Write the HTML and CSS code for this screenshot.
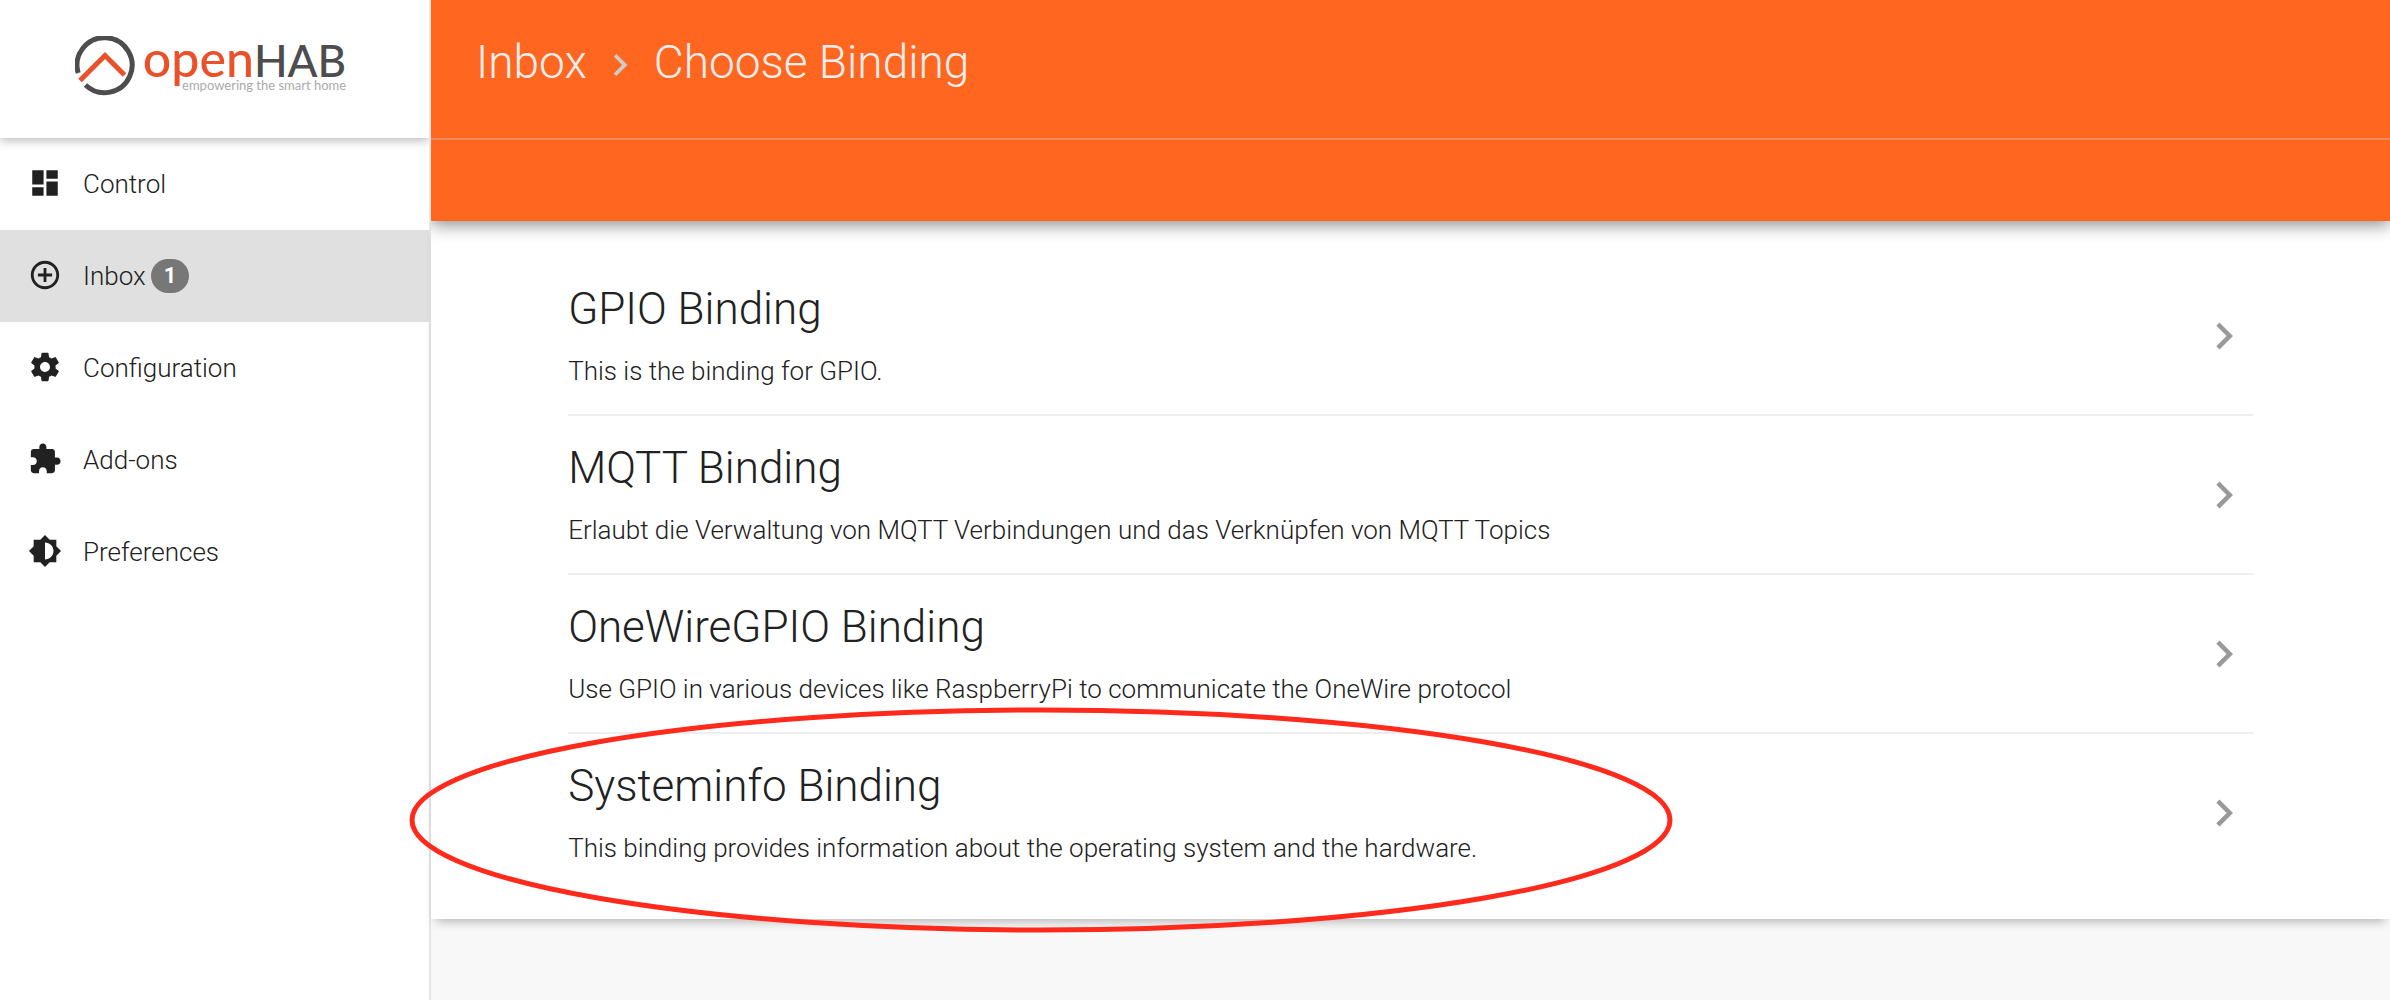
FILE: index.html
```html
<!DOCTYPE html>
<html lang="en">

<head>
  <meta charset="UTF-8">
  <meta name="viewport" content="width=device-width, initial-scale=1.0">
  <title>Inbox - Choose Binding</title>
  <link rel="stylesheet" href="styles.css">
</head>

<body>

  <aside class="sidebar">
    <a href="#" class="logo">
      <svg class="logo-mark" viewBox="0 0 60 60">
        <path d="M3.200 37 A27.500 27.500 0 1 1 10.500 49" fill="none" stroke="#4d4d4d" stroke-width="5" />
        <path d="M5 44.500 L30 19.500 L49.500 39" fill="none" stroke="#e9512b" stroke-width="5" />
      </svg>
      <span class="logo-text">
        <span class="logo-name"><span class="logo-open">open</span><span class="logo-hab">HAB</span></span>
        <span class="logo-tagline">empowering the smart home</span>
      </span>
    </a>

    <nav class="menu">
      <a href="#" class="menu-item">
        <svg class="icon" viewBox="0 0 24 24"><path d="M3 13h8V3H3v10zm0 8h8v-6H3v6zm10 0h8V11h-8v10zm0-18v6h8V3h-8z" /></svg>
        <span>Control</span>
      </a>
      <a href="#" class="menu-item active">
        <svg class="icon" viewBox="0 0 24 24"><path d="M13 7h-2v4H7v2h4v4h2v-4h4v-2h-4V7zm-1-5C6.480 2 2 6.480 2 12s4.480 10 10 10 10-4.480 10-10S17.520 2 12 2zm0 18c-4.410 0-8-3.590-8-8s3.590-8 8-8 8 3.590 8 8-3.590 8-8 8z" /></svg>
        <span>Inbox</span>
        <span class="badge">1</span>
      </a>
      <a href="#" class="menu-item">
        <svg class="icon" viewBox="0 0 24 24"><path d="M19.430 12.980c.04-.32.07-.64.07-.98s-.03-.66-.07-.98l2.110-1.650c.19-.15.24-.42.12-.64l-2-3.460c-.12-.22-.39-.3-.61-.22l-2.490 1c-.52-.4-1.080-.73-1.690-.98l-.38-2.650C14.460 2.180 14.250 2 14 2h-4c-.25 0-.46.18-.49.42l-.38 2.650c-.61.25-1.170.59-1.690.98l-2.490-1c-.23-.09-.49 0-.61.22l-2 3.460c-.13.22-.07.49.12.64l2.110 1.650c-.04.32-.07.65-.07.98s.03.66.07.98l-2.110 1.650c-.19.15-.24.42-.12.64l2 3.460c.12.22.39.3.61.22l2.490-1c.52.4 1.080.73 1.690.98l.38 2.650c.03.24.24.42.49.42h4c.25 0 .46-.18.49-.42l.38-2.650c.61-.25 1.170-.59 1.690-.98l2.490 1c.23.09.49 0 .61-.22l2-3.460c.12-.22.07-.49-.12-.64l-2.110-1.650zM12 15.500c-1.930 0-3.500-1.570-3.500-3.500s1.570-3.500 3.500-3.500 3.500 1.570 3.500 3.500-1.570 3.500-3.500 3.500z" /></svg>
        <span>Configuration</span>
      </a>
      <a href="#" class="menu-item">
        <svg class="icon" viewBox="0 0 24 24"><path d="M20.500 11H19V7c0-1.100-.9-2-2-2h-4V3.500C13 2.120 11.880 1 10.500 1S8 2.120 8 3.500V5H4c-1.100 0-1.990.9-1.990 2v3.800H3.500c1.490 0 2.700 1.210 2.700 2.700s-1.210 2.700-2.700 2.700H2V20c0 1.100.9 2 2 2h3.800v-1.500c0-1.490 1.210-2.700 2.700-2.700 1.490 0 2.700 1.210 2.700 2.700V22H17c1.100 0 2-.9 2-2v-4h1.500c1.380 0 2.500-1.120 2.500-2.500S21.880 11 20.500 11z" /></svg>
        <span>Add-ons</span>
      </a>
      <a href="#" class="menu-item">
        <svg class="icon" viewBox="0 0 24 24"><path d="M20 15.310L23.310 12 20 8.690V4h-4.690L12 .69 8.690 4H4v4.690L.69 12 4 15.310V20h4.690L12 23.310 15.310 20H20v-4.690zM12 18V6c3.310 0 6 2.690 6 6s-2.690 6-6 6z" /></svg>
        <span>Preferences</span>
      </a>
    </nav>
  </aside>

  <main class="content">
    <header class="header">
      <div class="breadcrumb">
        <a href="#">Inbox</a>
        <svg class="breadcrumb-arrow" viewBox="0 0 24 24"><path d="M10 6L8.590 7.410 13.170 12l-4.580 4.590L10 18l6-6z" /></svg>
        <span>Choose Binding</span>
      </div>
      <div class="toolbar"></div>
    </header>

    <section class="bindings">
      <a href="#" class="binding">
        <div class="binding-info">
          <h2>GPIO Binding</h2>
          <p>This is the binding for GPIO.</p>
        </div>
        <svg class="chevron" viewBox="0 0 24 24"><path d="M10 6L8.590 7.410 13.170 12l-4.580 4.590L10 18l6-6z" /></svg>
      </a>
      <a href="#" class="binding">
        <div class="binding-info">
          <h2>MQTT Binding</h2>
          <p>Erlaubt die Verwaltung von MQTT Verbindungen und das Verknüpfen von MQTT Topics</p>
        </div>
        <svg class="chevron" viewBox="0 0 24 24"><path d="M10 6L8.590 7.410 13.170 12l-4.580 4.590L10 18l6-6z" /></svg>
      </a>
      <a href="#" class="binding">
        <div class="binding-info">
          <h2>OneWireGPIO Binding</h2>
          <p>Use GPIO in various devices like RaspberryPi to communicate the OneWire protocol</p>
        </div>
        <svg class="chevron" viewBox="0 0 24 24"><path d="M10 6L8.590 7.410 13.170 12l-4.580 4.590L10 18l6-6z" /></svg>
      </a>
      <a href="#" class="binding">
        <div class="binding-info">
          <h2>Systeminfo Binding</h2>
          <p>This binding provides information about the operating system and the hardware.</p>
        </div>
        <svg class="chevron" viewBox="0 0 24 24"><path d="M10 6L8.590 7.410 13.170 12l-4.580 4.590L10 18l6-6z" /></svg>
        <!-- red marker around the binding to pick -->
        <svg class="marker" viewBox="0 0 1264 226"><ellipse cx="632" cy="113" rx="629" ry="110" /></svg>
      </a>
    </section>
  </main>

</body>

</html>
```
FILE: styles.css
```css
* {
  box-sizing: border-box;
}

body {
  margin: 0;
  min-height: 100vh;
  display: flex;
  font-family: Roboto, "Liberation Sans", sans-serif;
  font-size: 26px;
  font-weight: 300;
  color: #212121;
  background-color: #f8f8f8;
}

a {
  color: inherit;
  text-decoration: none;
}

/* Sidebar */
.sidebar {
  flex: none;
  width: 431px;
  background-color: #fff;
  border-right: 2px solid #e5e5e5;
}

.logo {
  display: flex;
  justify-content: center;
  gap: 8px;
  height: 138px;
  padding-top: 36px;
  padding-right: 8px;
  box-shadow: 0 2px 10px rgba(0, 0, 0, 0.3);
  clip-path: inset(0 0 -20px 0);
}

.logo-mark {
  width: 60px;
  height: 60px;
}

.logo-text {
  display: flex;
  flex-direction: column;
  align-items: flex-end;
  padding-top: 4px;
  font-family: Lato, sans-serif;
}

.logo-name {
  display: flex;
  align-items: baseline;
  line-height: 36px;
  font-weight: 500;
}

.logo-open {
  font-size: 50px;
  color: #e9512b;
}

.logo-hab {
  font-size: 44px;
  color: #4d4d4d;
}

.logo-tagline {
  font-size: 13px;
  line-height: 14px;
  font-weight: 400;
  color: #aaa;
}

.menu-item {
  display: flex;
  align-items: center;
  height: 92px;
  padding-left: 28px;
}

.menu-item.active {
  background-color: #e0e0e0;
}

.icon {
  width: 34px;
  height: 34px;
  margin-right: 21px;
  margin-bottom: 3px;
  fill: #212121;
}

.badge {
  margin-left: 5px;
  padding: 0 13px;
  border-radius: 17px;
  background-color: #777;
  color: #fff;
  font-size: 22px;
  line-height: 34px;
  font-weight: 700;
}

/* Content */
.content {
  flex: 1;
  min-width: 0;
}

.header {
  position: relative;
  background-color: #ff6720;
  box-shadow: 0 4px 16px rgba(0, 0, 0, 0.45);
  clip-path: inset(0 0 -30px 0);
}

.breadcrumb {
  display: flex;
  align-items: center;
  height: 140px;
  padding: 0 45px 14px;
  border-bottom: 2px solid #ee8a58;
  font-size: 46px;
  color: #eee;
}

.breadcrumb-arrow {
  width: 44px;
  height: 44px;
  margin: 6px 12px 0 11px;
  fill: #ccc;
}

.toolbar {
  height: 81px;
}

.bindings {
  padding: 36px 7% 28px;
  background-color: #fff;
  box-shadow: 0 7px 10px -5px rgba(0, 0, 0, 0.3);
}

.binding {
  position: relative;
  display: flex;
  justify-content: space-between;
  align-items: center;
  padding: 20px 0 25px;
  border-bottom: 2px solid #eee;
}

.binding:last-child {
  border-bottom: none;
}

.binding h2 {
  margin: 0 0 12px;
  font-size: 44px;
  line-height: 64px;
  font-weight: 300;
}

.binding p {
  margin: 0;
  line-height: 36px;
}

.chevron {
  width: 54px;
  height: 54px;
  margin-top: 6px;
  margin-right: 2px;
  fill: #999;
}

.marker {
  position: absolute;
  top: -27px;
  left: -159px;
  width: 1264px;
  height: 226px;
  pointer-events: none;
}

.marker ellipse {
  fill: none;
  stroke: #ff2a1c;
  stroke-width: 5;
}
```
